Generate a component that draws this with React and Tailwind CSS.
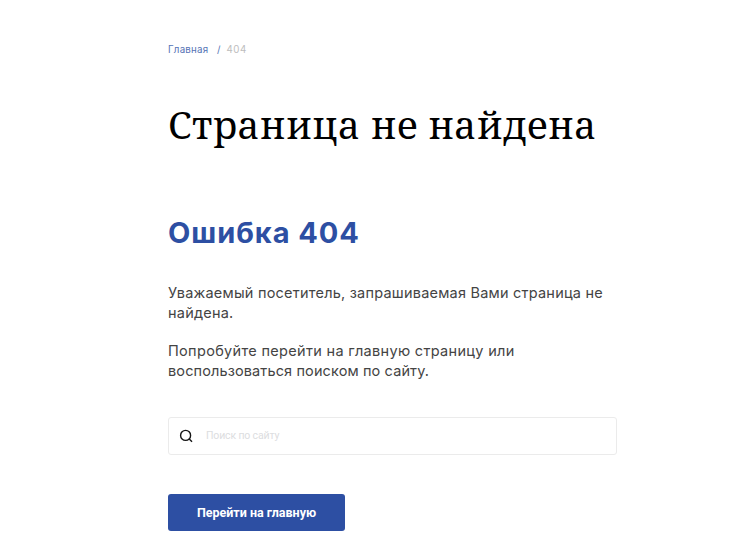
function SearchIcon() {
  return (
    <svg
      className="size-[14px] shrink-0"
      viewBox="0 0 14 14"
      fill="none"
      stroke="#151515"
      strokeWidth="1.4"
      aria-hidden="true"
    >
      <circle cx="6.6" cy="6.4" r="5" />
      <path d="M10 9.8 13 12.8" />
    </svg>
  );
}

export default function App() {
  return (
    <main className="flex h-[559px] flex-col items-start overflow-hidden bg-white pl-[168px] pt-[43px] font-['Inter',sans-serif]">
      <nav className="flex h-[14px] items-center text-[9.75px] leading-[14px]">
        <a href="#" className="w-[41px] whitespace-nowrap tracking-[0.2px] text-[#5573b5]">
          Главная
        </a>
        <span className="ml-[8px] text-[#5573b5]">/</span>
        <span className="ml-[6px] tracking-[0.5px] text-[#bdbdbd]">404</span>
      </nav>

      <h1 className="mt-[41px] whitespace-nowrap font-['Noto_Serif','DejaVu_Serif',serif] text-[38.5px] leading-[52px] tracking-[0.35px] text-black">
        Страница не найдена
      </h1>

      <h2 className="mt-[63px] whitespace-nowrap text-[29px] font-bold leading-[40px] tracking-[0.95px] text-[#2d4fa3]">
        Ошибка 404
      </h2>

      <div className="mt-[30px] w-[448px] whitespace-nowrap text-[14.5px] leading-[20px] tracking-[0.22px] text-[#444]">
        <p>
          Уважаемый посетитель, запрашиваемая Вами страница не
          <br />
          найдена.
        </p>
        <p className="mt-[18px] tracking-[0.32px]">
          Попробуйте перейти на главную страницу или
          <br />
          <span className="tracking-[0.12px]">воспользоваться поиском по сайту.</span>
        </p>
      </div>

      <form
        className="mt-[36px] flex h-[38px] w-[449px] items-center rounded-[3px] border border-[#ebebeb] pl-[10px]"
        onSubmit={(event) => event.preventDefault()}
      >
        <SearchIcon />
        <input
          type="text"
          placeholder="Поиск по сайту"
          className="ml-[13px] w-full font-['Roboto',sans-serif] text-[10.5px] tracking-[-0.15px] outline-none placeholder:text-[#dcdde0]"
        />
      </form>

      <a
        href="#"
        className="mt-[39px] flex h-[37px] w-[177px] items-center justify-center rounded-[3px] bg-[#2d4fa3] pt-[2px] font-['Roboto',sans-serif] text-[12.5px] font-bold text-white"
      >
        Перейти на главную
      </a>
    </main>
  );
}
